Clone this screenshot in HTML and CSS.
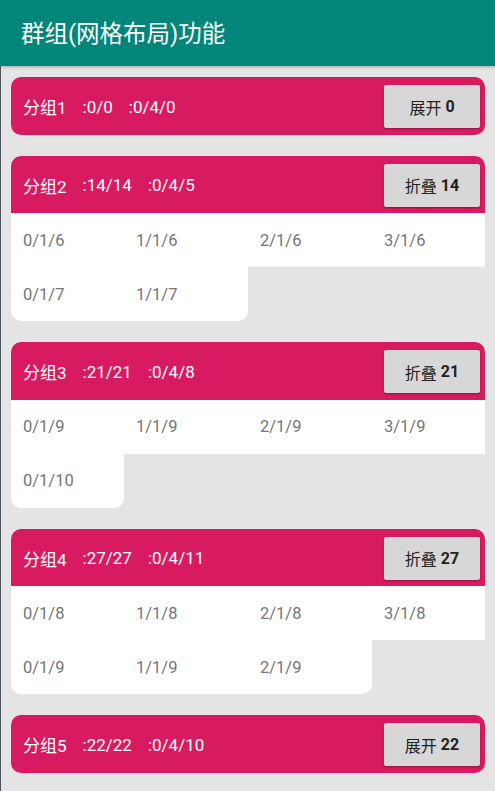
FILE: index.html
```html
<!DOCTYPE html>
<html lang="zh">
<head>
<meta charset="utf-8">
<link rel="stylesheet" href="styles.css">
</head>
<body>
<div class="app">
  <header class="appbar"><h1 class="title">群组(网格布局)功能</h1></header>
  <main class="list">
    <section class="group">
      <div class="ghead">
        <div class="ginfo"><span>分组1</span><span>:0/0</span><span>:0/4/0</span></div>
        <button class="gbtn">展开 <b>0</b></button>
      </div>
    </section>

    <section class="group open">
      <div class="ghead">
        <div class="ginfo"><span>分组2</span><span>:14/14</span><span>:0/4/5</span></div>
        <button class="gbtn">折叠 <b>14</b></button>
      </div>
      <div class="grid">
        <div class="cell">0/1/6</div><div class="cell">1/1/6</div><div class="cell">2/1/6</div><div class="cell">3/1/6</div>
        <div class="cell first-last">0/1/7</div><div class="cell last">1/1/7</div>
      </div>
    </section>

    <section class="group open">
      <div class="ghead">
        <div class="ginfo"><span>分组3</span><span>:21/21</span><span>:0/4/8</span></div>
        <button class="gbtn">折叠 <b>21</b></button>
      </div>
      <div class="grid">
        <div class="cell">0/1/9</div><div class="cell">1/1/9</div><div class="cell">2/1/9</div><div class="cell">3/1/9</div>
        <div class="cell first-last last">0/1/10</div>
      </div>
    </section>

    <section class="group open">
      <div class="ghead">
        <div class="ginfo"><span>分组4</span><span>:27/27</span><span>:0/4/11</span></div>
        <button class="gbtn">折叠 <b>27</b></button>
      </div>
      <div class="grid">
        <div class="cell">0/1/8</div><div class="cell">1/1/8</div><div class="cell">2/1/8</div><div class="cell">3/1/8</div>
        <div class="cell first-last">0/1/9</div><div class="cell">1/1/9</div><div class="cell last">2/1/9</div>
      </div>
    </section>

    <section class="group">
      <div class="ghead">
        <div class="ginfo"><span>分组5</span><span>:22/22</span><span>:0/4/10</span></div>
        <button class="gbtn">展开 <b>22</b></button>
      </div>
    </section>
  </main>
</div>
</body>
</html>
```

FILE: styles.css
```css
html, body {
  margin: 0;
  padding: 0;
  height: 100%;
  overflow: hidden;
}
body {
  background: #e4e4e4;
  font-family: Roboto, "Noto Sans CJK SC", sans-serif;
}
.app {
  height: 100%;
  display: flex;
  flex-direction: column;
}
.appbar {
  height: 66px;
  background: #028679;
  display: flex;
  align-items: center;
  padding-left: 21px;
  box-shadow: 0 1px 3px rgba(0,0,0,0.25);
  position: relative;
  z-index: 1;
  flex: none;
}
.title {
  margin: 0;
  color: #fff;
  font-size: 23.5px;
  font-weight: 400;
  padding-bottom: 2px;
}
.list {
  flex: 1;
  border-left: 1px solid #4b5259;
  padding: 11px 10px 0 10px;
  display: flex;
  flex-direction: column;
  gap: 21px;
}
.group {
  width: 474px;
}
.ghead {
  height: 57.5px;
  background: #d81b60;
  border-radius: 10px;
  display: flex;
  align-items: flex-start;
  justify-content: space-between;
  box-sizing: border-box;
  padding: 8px 5px 0 12px;
}
.group.open .ghead {
  border-radius: 10px 10px 0 0;
}
.ginfo {
  display: flex;
  gap: 16px;
  color: #fff;
  font-size: 17px;
  height: 43px;
  align-items: center;
}
.gbtn {
  width: 96px;
  height: 43px;
  border: none;
  border-radius: 2px;
  background: #d6d7d6;
  color: #222;
  font-family: Roboto, "Noto Sans CJK SC", sans-serif;
  font-size: 16px;
  font-weight: 400;
  box-shadow: 0 1px 2px rgba(0,0,0,0.35);
  padding: 0;
  display: flex;
  align-items: center;
  justify-content: center;
  gap: 4px;
}
.gbtn b {
  font-weight: 700;
}
.grid {
  display: grid;
  grid-template-columns: 113px 124px 124px 113px;
  grid-auto-rows: 54px;
}
.cell {
  background: #fff;
  color: #757575;
  font-size: 16.5px;
  display: flex;
  align-items: center;
  padding-left: 12px;
}
.cell.first-last {
  border-bottom-left-radius: 10px;
}
.cell.last {
  border-bottom-right-radius: 10px;
}
```
